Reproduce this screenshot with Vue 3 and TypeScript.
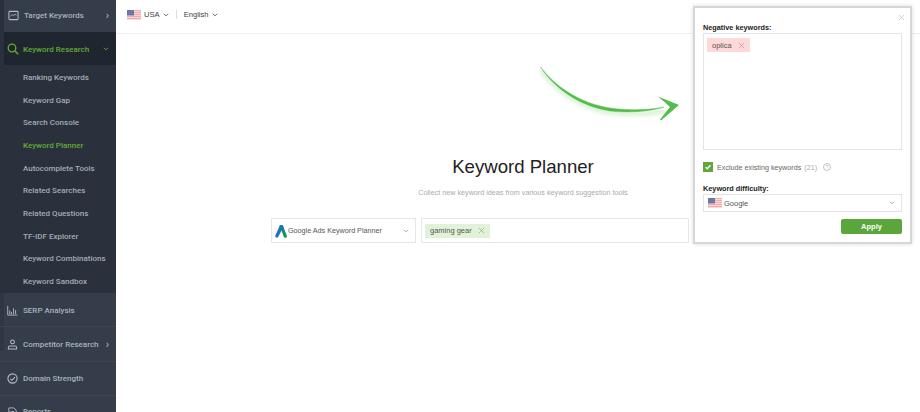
<script setup lang="ts">
interface NavItem { label: string; icon: string; arrow?: boolean }
const subItems: string[] = ['Ranking Keywords','Keyword Gap','Search Console','Keyword Planner','Autocomplete Tools','Related Searches','Related Questions','TF-IDF Explorer','Keyword Combinations','Keyword Sandbox']
const lowerItems: NavItem[] = [
  { label: 'SERP Analysis', icon: 'bars' },
  { label: 'Competitor Research', icon: 'user', arrow: true },
  { label: 'Domain Strength', icon: 'gauge' },
  { label: 'Reports', icon: 'doc' },
]
</script>

<template>
  <div class="page">
    <aside class="sidebar">
      <div class="nav-row first">
        <svg class="nav-icon" viewBox="0 0 12 12" width="11" height="11"><rect x="1" y="1.5" width="10" height="9" rx="1" fill="none" stroke="#b4bbc5" stroke-width="1.1"/><path d="M2.5 7l2-2.2 1.6 1.6 1.6-2 1.6 1.2" fill="none" stroke="#b4bbc5" stroke-width=".9"/></svg>
        <span class="nav-label">Target Keywords</span>
        <span class="chev-r">›</span>
      </div>
      <div class="nav-row active">
        <svg class="nav-icon wide" viewBox="0 0 12 12" width="12" height="12"><circle cx="5" cy="5" r="3.8" fill="none" stroke="#62ad33" stroke-width="1.3"/><path d="M8 8l3.2 3.2" stroke="#62ad33" stroke-width="1.4"/></svg>
        <span class="nav-label">Keyword Research</span>
        <svg class="chev-d" viewBox="0 0 8 5" width="6" height="4"><path d="M1 1l3 2.5L7 1" fill="none" stroke="#62ad33" stroke-width="1.1"/></svg>
      </div>
      <ul class="sub-list">
        <li v-for="s in subItems" :key="s" class="sub-item" :class="{ current: s === 'Keyword Planner' }">{{ s }}</li>
      </ul>
      <div v-for="(n, i) in lowerItems" :key="n.label" class="nav-row lower" :class="{ 'strip-full': i === 0, 'strip-part': i === 1, partial: n.icon === 'doc' }">
        <svg class="nav-icon" viewBox="0 0 12 12" width="11" height="11">
          <path v-if="n.icon === 'bars'" d="M.8 1v10h10.4M3 10V6M5 10V7.5M7.2 10V3.5M9.4 10V5.5" fill="none" stroke="#b4bbc5" stroke-width="1"/>
          <g v-else-if="n.icon === 'user'" fill="none" stroke="#b4bbc5" stroke-width="1.1"><circle cx="6" cy="3.2" r="2.1"/><path d="M1.5 11V9.2c0-1 .8-1.6 1.8-1.6h5.4c1 0 1.8.6 1.8 1.6V11z"/></g>
          <g v-else-if="n.icon === 'gauge'" fill="none" stroke="#b4bbc5" stroke-width="1.2"><circle cx="6" cy="6" r="5"/><path d="M3.6 6.4L5.4 8 8.6 4.4"/></g>
          <path v-else d="M2 1h5.5L10 3.5V11H2zM4 5h4M4 7h4" fill="none" stroke="#b4bbc5" stroke-width="1"/>
        </svg>
        <span class="nav-label">{{ n.label }}</span>
        <span v-if="n.arrow" class="chev-r">›</span>
      </div>
    </aside>

    <main class="main">
      <header class="topbar">
        <svg class="flag" viewBox="0 0 14 10" width="14" height="10">
          <rect width="14" height="10" fill="#f3a9ad"/>
          <path d="M0 1.5h14M0 3.5h14M0 5.5h14M0 7.5h14M0 9.5h14" stroke="#f7e6e6" stroke-width=".8"/>
          <rect width="7" height="5.5" fill="#6d77a5"/>
        </svg>
        <span class="top-text usa">USA</span>
        <svg class="top-chev" viewBox="0 0 8 5" width="6" height="4"><path d="M1 1l3 2.5L7 1" fill="none" stroke="#555" stroke-width="1.1"/></svg>
        <span class="top-sep"></span>
        <span class="top-text">English</span>
        <svg class="top-chev" viewBox="0 0 8 5" width="6" height="4"><path d="M1 1l3 2.5L7 1" fill="none" stroke="#555" stroke-width="1.1"/></svg>
      </header>

      <section class="hero">
        <h1 class="title">Keyword Planner</h1>
        <p class="subtitle">Collect new keyword ideas from various keyword suggestion tools</p>
        <div class="form">
          <div class="source">
            <svg class="ads-logo" viewBox="0 0 12 14" width="12" height="14">
              <path d="M5 1L.4 11.4a1.6 1.6 0 0 0 3 1.2L7.4 5z" fill="#1a73c8"/>
              <path d="M4.6 1.4L7.6 1l4.2 10.6a1.6 1.6 0 0 1-3 1.2z" fill="#12945a"/>
              <path d="M4.6 1.4L7.6 1l1.6 4.2L7 7z" fill="#1a73c8"/>
            </svg>
            <span class="source-text">Google Ads Keyword Planner</span>
            <svg class="select-chev" viewBox="0 0 8 5" width="6" height="4"><path d="M1 1l3 2.5L7 1" fill="none" stroke="#999" stroke-width="1"/></svg>
          </div>
          <div class="keywords">
            <span class="tag green">gaming gear <svg viewBox="0 0 8 8" width="7" height="7"><path d="M1 1l6 6M7 1L1 7" stroke="#8fb98a" stroke-width=".9"/></svg></span>
          </div>
          <div class="hidden-action"></div>
        </div>
      </section>

      <svg class="arrow" viewBox="0 0 150 60" width="150" height="60">
        <defs><filter id="glow" x="-20%" y="-40%" width="140%" height="200%"><feGaussianBlur stdDeviation="2"/></filter></defs>
        <path d="M1 2C20 26 50 44 80 44.5C100 45 115 44 125 42" fill="none" stroke="#c8e9bf" stroke-width="3" filter="url(#glow)" transform="translate(0 3)"/>
        <path d="M0.5 1C16 22 44 40 78 43C96 44.5 112 43.5 124 41C110 45.5 92 46.6 76 45.6C42 43 14 22 0.5 1Z" fill="#52bd4a" stroke="#52bd4a" stroke-width=".4"/>
        <path d="M118 30.5L139 39L121 54.5L120 53.5L130 41C126 37 122 34 118 30.5Z" fill="#52bd4a"/>
      </svg>

      <aside class="popup">
        <svg class="popup-close" viewBox="0 0 8 8" width="7" height="7"><path d="M1 1l6 6M7 1L1 7" stroke="#c8c8c8" stroke-width=".9"/></svg>
        <label class="popup-label">Negative keywords:</label>
        <div class="neg-box">
          <span class="tag pink">oplica <svg viewBox="0 0 8 8" width="7" height="7"><path d="M1 1l6 6M7 1L1 7" stroke="#d88f8f" stroke-width=".9"/></svg></span>
        </div>
        <div class="check-row">
          <span class="checkbox"><svg viewBox="0 0 10 10" width="8" height="8"><path d="M2 5.2l2.1 2L8 2.8" fill="none" stroke="#fff" stroke-width="1.6"/></svg></span>
          <span class="check-text">Exclude existing keywords</span>
          <span class="check-count">(21)</span>
          <span class="help">?</span>
        </div>
        <label class="popup-label diff">Keyword difficulty:</label>
        <div class="diff-select">
          <svg class="flag" viewBox="0 0 14 10" width="14" height="10">
            <rect width="14" height="10" fill="#f3a9ad"/>
            <path d="M0 1.5h14M0 3.5h14M0 5.5h14M0 7.5h14M0 9.5h14" stroke="#f7e6e6" stroke-width=".8"/>
            <rect width="7" height="5.5" fill="#6d77a5"/>
          </svg>
          <span class="diff-text">Google</span>
          <svg class="select-chev" viewBox="0 0 8 5" width="6" height="4"><path d="M1 1l3 2.5L7 1" fill="none" stroke="#999" stroke-width="1"/></svg>
        </div>
        <div class="apply-row"><button class="apply" type="button">Apply</button></div>
      </aside>
    </main>
  </div>
</template>

<style>
html, body { margin: 0; background: #fff; overflow: hidden; }
</style>

<style scoped>
.page { display: flex; width: 920px; height: 412px; overflow: hidden; font-family: "Liberation Sans", Arial, sans-serif; background: #fff; }
.sidebar { width: 116px; flex: none; background: #343d49; overflow: hidden; font-family: Roboto, "Liberation Sans", sans-serif; font-weight: 500; }
.nav-row { display: flex; align-items: center; font-size: 8px; color: #aab2bd; box-sizing: border-box; position: relative; }
.nav-row.first { height: 32px; padding: 0 0 2px 8px; box-shadow: inset 4px 0 0 #2a313c; }
.nav-row.active { height: 33px; padding: 1px 0 0 7px; color: #62ad33; background: #1f2630; box-shadow: inset 4px 0 0 #2a313c; }
.nav-row.lower { height: 34.4px; flex-shrink: 0; padding: 1px 0 0 7px; border-bottom: 1px solid #3d4652; }
.nav-row.strip-full { box-shadow: inset 4px 0 0 #2f3743; }
.nav-row.strip-part { background: linear-gradient(#2f3743, #2f3743) 0 0 / 4px 24px no-repeat; }
.nav-row.partial { align-items: flex-start; padding-top: 11px; }
.nav-icon { flex: none; margin-right: 5px; }
.nav-icon.wide { margin-right: 4px; }
.nav-label { white-space: nowrap; }
.chev-r { margin-left: auto; margin-right: 7px; font-size: 11px; line-height: 1; }
.chev-d { margin-left: auto; margin-right: 7px; }
.sub-list { list-style: none; margin: 0; padding: 1px 0 0; box-sizing: border-box; background: #2a313c; height: 228px; display: grid; grid-auto-rows: 22.7px; }
.sub-item { display: flex; align-items: center; padding-left: 23px; font-size: 8px; color: #a3abb6; white-space: nowrap; }
.sub-item.current { color: #62ad33; }
.main { flex: 1; min-width: 0; position: relative; }
.topbar { height: 34px; box-sizing: border-box; border-bottom: 1px solid #eeeeee; display: flex; align-items: center; padding: 0 0 4px 11px; }
.flag { flex: none; }
.top-text { font-size: 7.6px; color: #444; font-family: "Liberation Sans", sans-serif; }
.usa { margin-left: 3px; }
.top-chev { margin-left: 3px; }
.top-sep { width: 1px; height: 9px; background: #ddd; margin: 0 7px 0 7px; }
.hero { padding: 122px 0 0 10px; display: flex; flex-direction: column; align-items: center; }
.title { margin: 0; font-size: 18.6px; line-height: 22px; font-weight: 400; color: #222; }
.subtitle { margin: 10px 0 0; font-size: 7.2px; line-height: 10px; color: #aaa; }
.form { margin-top: 20px; width: 504px; display: flex; gap: 5px; height: 25px; }
.source { width: 145px; box-sizing: border-box; border: 1px solid #e6e6e6; display: flex; align-items: center; padding: 0 6px 0 3px; }
.ads-logo { flex: none; margin-right: 1px; }
.source-text { font-size: 7.2px; color: #555; white-space: nowrap; }
.select-chev { margin-left: auto; flex: none; }
.keywords { width: 268px; box-sizing: border-box; border: 1px solid #e6e6e6; display: flex; align-items: center; padding-left: 3px; }
.hidden-action { flex: 1; }
.tag { display: flex; width: max-content; align-items: center; gap: 6px; height: 14px; padding: 0 5px; font-size: 7.5px; color: #555; }
.tag.green { background: #e2f2d8; }
.tag.pink { background: #fdd9d9; }
.arrow { position: absolute; left: 424px; top: 66px; }
.popup { position: absolute; left: 577px; top: 6px; width: 219px; height: 238px; box-sizing: border-box; background: #fff; border: 2px solid #d6d6d6; box-shadow: 0 0 4px rgba(0,0,0,.15); padding: 15px 8px 0; }
.popup-close { position: absolute; right: 5px; top: 6px; }
.popup-label { display: block; font-size: 7.3px; line-height: 10px; font-weight: 700; color: #222; }
.neg-box { margin-top: 0; height: 117px; box-sizing: border-box; border: 1px solid #e4e4e4; padding: 4px 3px; }
.check-row { display: flex; align-items: center; margin-top: 12px; height: 10px; font-size: 7.2px; color: #666; }
.checkbox { width: 10px; height: 10px; background: #62a73c; display: flex; align-items: center; justify-content: center; margin-right: 4px; }
.check-count { margin-left: 3px; color: #aaa; }
.help { margin-left: 6px; width: 6px; height: 6px; border: 1px solid #c4c4c4; border-radius: 50%; font-size: 5.5px; line-height: 6px; text-align: center; color: #bbb; }
.diff { margin-top: 12px; }
.diff-select { margin-top: 0; height: 18px; box-sizing: border-box; border: 1px solid #e4e4e4; display: flex; align-items: center; padding: 0 6px 0 4px; }
.diff-text { margin-left: 2px; font-size: 7.5px; color: #555; }
.apply-row { margin-top: 7px; display: flex; justify-content: flex-end; }
.apply { width: 61px; height: 15px; border: none; border-radius: 2px; background: #5aa63a; color: #fff; font-family: inherit; font-size: 7.5px; font-weight: 700; padding: 0; }
</style>
